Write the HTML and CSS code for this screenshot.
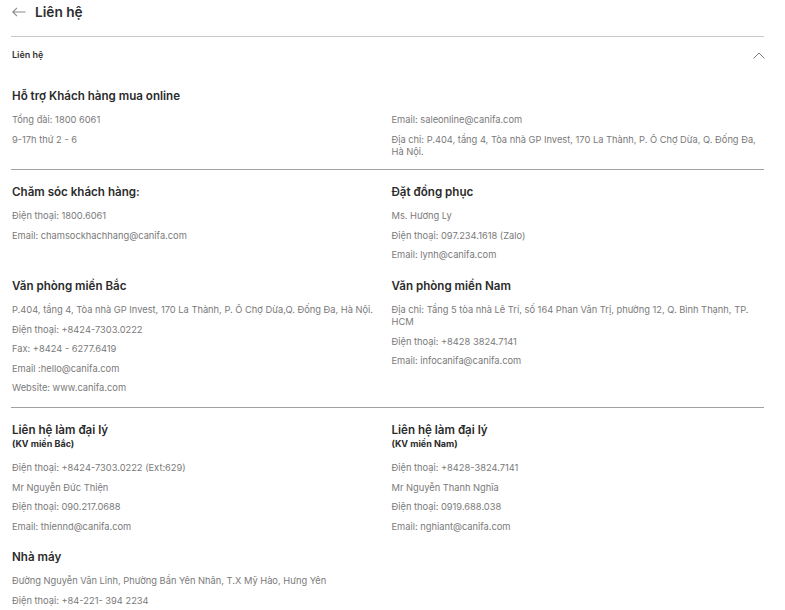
FILE: index.html
```html
<!DOCTYPE html>
<html lang="vi">
<head>
<meta charset="utf-8">
<title>Liên hệ</title>
<link rel="stylesheet" href="styles.css">
</head>
<body>
<div class="page">
  <header class="topbar">
    <svg class="back" width="14" height="10" viewBox="0 0 14 10" aria-hidden="true">
      <path d="M13.5 5H0.8M5 0.8L0.8 5L5 9.2" fill="none" stroke="#8a8a8a" stroke-width="1.1"/>
    </svg>
    <h1 class="title">Liên hệ</h1>
  </header>

  <div class="acc-head">
    <span class="acc-label">Liên hệ</span>
    <svg class="chev" width="12" height="7" viewBox="0 0 12 7" aria-hidden="true">
      <path d="M0.6 6.4L6 1L11.4 6.4" fill="none" stroke="#7a7a7a" stroke-width="1"/>
    </svg>
  </div>

  <section class="sec sec-first">
    <h2 class="h">Hỗ trợ Khách hàng mua online</h2>
    <div class="grid">
      <div class="col">
        <p>Tổng đài: 1800 6061</p>
        <p>9-17h thứ 2 - 6</p>
      </div>
      <div class="col">
        <p>Email: saleonline@canifa.com</p>
        <p>Địa chỉ: P.404, tầng 4, Tòa nhà GP Invest, 170 La Thành, P. Ô Chợ Dừa, Q. Đống Đa, Hà Nội.</p>
      </div>
    </div>
  </section>

  <section class="sec">
    <div class="grid">
      <div class="col">
        <h2 class="h">Chăm sóc khách hàng:</h2>
        <p>Điện thoại: 1800.6061</p>
        <p>Email: chamsockhachhang@canifa.com</p>
      </div>
      <div class="col">
        <h2 class="h">Đặt đồng phục</h2>
        <p>Ms. Hương Ly</p>
        <p>Điện thoại: 097.234.1618 (Zalo)</p>
        <p>Email: lynh@canifa.com</p>
      </div>
      <div class="col">
        <h2 class="h">Văn phòng miền Bắc</h2>
        <p>P.404, tầng 4, Tòa nhà GP Invest, 170 La Thành, P. Ô Chợ Dừa,Q. Đống Đa, Hà Nội.</p>
        <p>Điện thoại: +8424-7303.0222</p>
        <p>Fax: +8424 - 6277.6419</p>
        <p>Email :hello@canifa.com</p>
        <p>Website: www.canifa.com</p>
      </div>
      <div class="col">
        <h2 class="h">Văn phòng miền Nam</h2>
        <p>Địa chỉ: Tầng 5 tòa nhà Lê Trí, số 164 Phan Văn Trị, phường 12, Q. Bình Thạnh, TP. HCM</p>
        <p>Điện thoại: +8428 3824.7141</p>
        <p>Email: infocanifa@canifa.com</p>
      </div>
    </div>
  </section>

  <section class="sec sec-last">
    <div class="grid">
      <div class="col">
        <h2 class="h h-tight">Liên hệ làm đại lý</h2>
        <h3 class="sub">(KV miền Bắc)</h3>
        <p>Điện thoại: +8424-7303.0222 (Ext:629)</p>
        <p>Mr Nguyễn Đức Thiện</p>
        <p>Điện thoại: 090.217.0688</p>
        <p>Email: thiennd@canifa.com</p>
      </div>
      <div class="col">
        <h2 class="h h-tight">Liên hệ làm đại lý</h2>
        <h3 class="sub">(KV miền Nam)</h3>
        <p>Điện thoại: +8428-3824.7141</p>
        <p>Mr Nguyễn Thanh Nghĩa</p>
        <p>Điện thoại: 0919.688.038</p>
        <p>Email: nghiant@canifa.com</p>
      </div>
      <div class="col">
        <h2 class="h">Nhà máy</h2>
        <p>Đường Nguyễn Văn Linh, Phường Bần Yên Nhân, T.X Mỹ Hào, Hưng Yên</p>
        <p>Điện thoại: +84-221- 394 2234</p>
      </div>
    </div>
  </section>
</div>
</body>
</html>
```

FILE: styles.css
```css
* { box-sizing: border-box; }
html, body { margin: 0; padding: 0; background: #fff; }
body {
  font-family: Inter, "Noto Sans", "Liberation Sans", sans-serif;
  color: #333;
}
.page {
  margin: 0 21px 0 11px;
}
.topbar {
  display: flex;
  align-items: center;
  height: 37px;
  padding: 0 0 13px 1px;
  border-bottom: 1px solid #c9c9c9;
}
.back { display: block; margin-right: 9px; }
.title {
  margin: 0;
  font-size: 13.7px;
  line-height: 16px;
  font-weight: 600;
  color: #2e2e2e;
}
.acc-head {
  display: flex;
  justify-content: space-between;
  align-items: center;
  padding: 12px 0 12px 1px;
  height: 36px;
}
.acc-label {
  font-size: 9px;
  line-height: 12px;
  font-weight: 600;
  color: #333;
}
.chev { display: block; margin-right: -1px; }
.sec {
  padding: 14px 0 5px 1px;
  border-bottom: 1px solid #a0a0a0;
}
.sec-first { padding-top: 15px; padding-bottom: 4px; }
.sec-last { border-bottom: none; }
.grid {
  display: grid;
  grid-template-columns: 1fr 1fr;
  column-gap: 7px;
  row-gap: 9px;
}
.h {
  margin: 0 0 10px;
  font-size: 11.6px;
  line-height: 16px;
  font-weight: 600;
  color: #2b2b2b;
}
.h-tight { margin-bottom: 0; }
.sub {
  margin: 0 0 12px;
  font-size: 9px;
  line-height: 12px;
  font-weight: 700;
  color: #2b2b2b;
}
p {
  margin: 0 0 7.6px;
  font-size: 9.3px;
  line-height: 12px;
  font-weight: 400;
  color: #7a7a7a;
}
```
